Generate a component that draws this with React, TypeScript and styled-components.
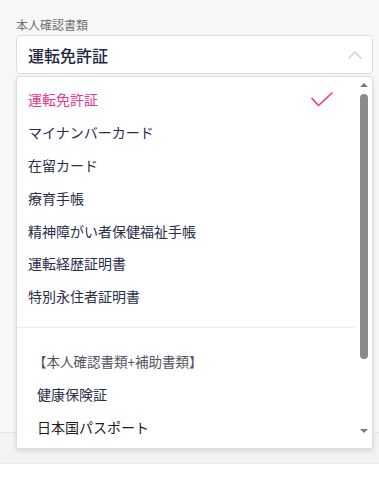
import React from "react";
import styled, { createGlobalStyle } from "styled-components";

const GlobalStyle = createGlobalStyle`
  html, body { margin: 0; padding: 0; }
  body {
    background: #f7f7f7;
    font-family: "Noto Sans CJK JP", "Noto Sans", sans-serif;
    width: 379px;
    height: 479px;
    overflow: hidden;
  }
`;

const Page = styled.div`
  position: relative;
  height: 479px;
  display: flex;
  flex-direction: column;
`;

const Field = styled.div`
  padding: 16px 6px 0 16px;
  display: flex;
  flex-direction: column;
  gap: 2px;
`;

const Label = styled.div`
  font-size: 12px;
  line-height: 17px;
  color: #707070;
`;

const SelectBox = styled.div`
  box-sizing: border-box;
  height: 39px;
  background: #fff;
  border: 1px solid #dcdcdc;
  border-radius: 4px;
  display: flex;
  align-items: center;
  justify-content: space-between;
  padding: 0 9px 0 11px;
`;

const SelectValue = styled.span`
  font-size: 16px;
  font-weight: 500;
  color: #23263f;
`;

const Spacer = styled.div`
  flex: 0 0 358px;
`;

const Band = styled.div`
  flex: 0 0 30px;
  border-top: 1px solid #e6e6e6;
  background: #f3f3f3;
`;

const Footer = styled.div`
  flex: 1;
  border-top: 1px solid #e8e8e8;
  background: #ffffff;
`;

const Dropdown = styled.div`
  position: absolute;
  top: 76px;
  left: 16px;
  width: 357px;
  height: 373px;
  box-sizing: border-box;
  background: #fff;
  border: 1px solid #dedede;
  border-radius: 3px;
  box-shadow: 0 2px 5px rgba(0, 0, 0, 0.12);
  display: flex;
  overflow: hidden;
`;

const List = styled.div`
  flex: 1;
  padding-top: 6px;
  overflow: hidden;
`;

const Item = styled.div<{ $active?: boolean; $indent?: number; $dark?: boolean }>`
  height: 32.8px;
  display: flex;
  align-items: center;
  justify-content: space-between;
  padding: 0 21px 0 ${(p) => p.$indent ?? 11}px;
  font-size: 14px;
  color: ${(p) => (p.$active ? "#e8388f" : p.$dark ? "#1c1c24" : "#2b2e4b")};
`;

const GroupHeader = styled.div`
  height: 32.8px;
  display: flex;
  align-items: center;
  padding-left: 16px;
  font-size: 13.5px;
  color: #555560;
`;

const Separator = styled.div`
  box-sizing: border-box;
  border-bottom: 1px solid #ececec;
  height: 15px;
  margin-bottom: 17px;
`;

const ScrollColumn = styled.div`
  flex: 0 0 17px;
  display: flex;
  flex-direction: column;
  align-items: center;
  padding-top: 6px;
`;

const Arrow = styled.div<{ $down?: boolean }>`
  width: 0;
  height: 0;
  border-left: 4px solid transparent;
  border-right: 4px solid transparent;
  ${(p) =>
    p.$down
      ? "border-top: 4px solid #7a7a7a;"
      : "border-bottom: 4px solid #7a7a7a;"}
`;

const Track = styled.div`
  flex: 0 0 342px;
  width: 100%;
  display: flex;
  justify-content: center;
  padding-top: 7px;
  box-sizing: border-box;
`;

const Thumb = styled.div`
  width: 8px;
  height: 265px;
  border-radius: 4px;
  background: #8a8a8a;
`;

const ChevronUp = () => (
  <svg width="16" height="10" viewBox="0 0 16 10" fill="none">
    <path d="M1.5 8.5 L8 2 L14.5 8.5" stroke="#c8c8c8" strokeWidth="1.2" />
  </svg>
);

const Check = () => (
  <svg width="24" height="16" viewBox="0 0 24 16" fill="none">
    <path d="M1.5 7 L8.5 14.5 L22.5 1.5" stroke="#e8388f" strokeWidth="1.6" strokeLinejoin="round" />
  </svg>
);

const primary = [
  "マイナンバーカード",
  "在留カード",
  "療育手帳",
  "精神障がい者保健福祉手帳",
  "運転経歴証明書",
  "特別永住者証明書",
];

export default function App() {
  return (
    <>
      <GlobalStyle />
      <Page>
        <Field>
          <Label>本人確認書類</Label>
          <SelectBox>
            <SelectValue>運転免許証</SelectValue>
            <ChevronUp />
          </SelectBox>
        </Field>
        <Spacer />
        <Band />
        <Footer />
        <Dropdown>
          <List>
            <Item $active>
              <span>運転免許証</span>
              <Check />
            </Item>
            {primary.map((t) => (
              <Item key={t}>{t}</Item>
            ))}
            <Separator />
            <GroupHeader>【本人確認書類+補助書類】</GroupHeader>
            <Item $indent={20}>健康保険証</Item>
            <Item $indent={20} $dark>
              日本国パスポート
            </Item>
          </List>
          <ScrollColumn>
            <Arrow />
            <Track>
              <Thumb />
            </Track>
            <Arrow $down />
          </ScrollColumn>
        </Dropdown>
      </Page>
    </>
  );
}
